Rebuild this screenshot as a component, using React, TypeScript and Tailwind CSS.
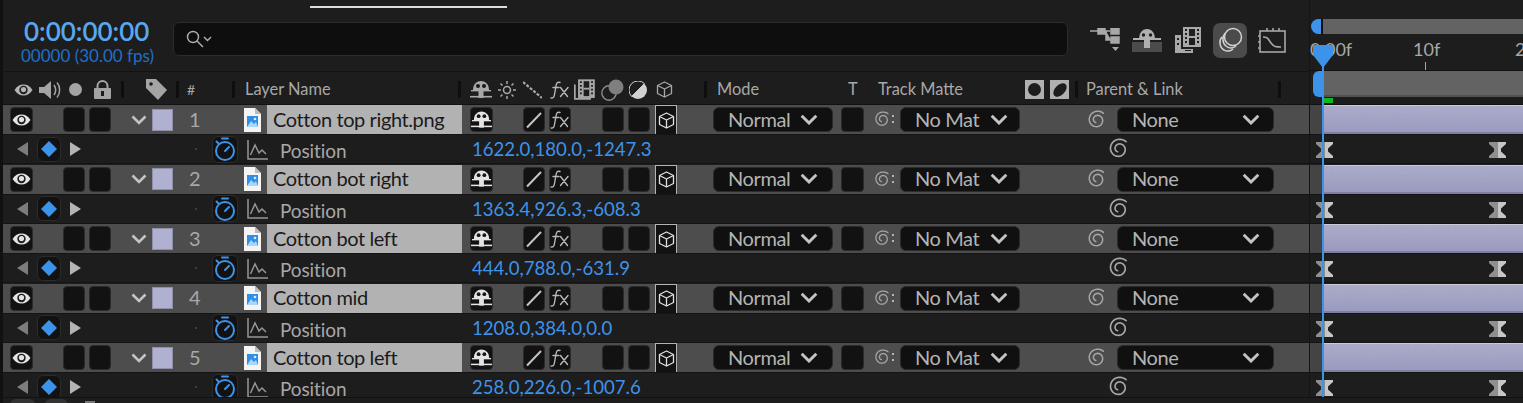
import type { ReactNode } from "react";

const layers = [
  { n: 1, name: "Cotton top right.png", pos: "1622.0,180.0,-1247.3" },
  { n: 2, name: "Cotton bot right", pos: "1363.4,926.3,-608.3" },
  { n: 3, name: "Cotton bot left", pos: "444.0,788.0,-631.9" },
  { n: 4, name: "Cotton mid", pos: "1208.0,384.0,0.0" },
  { n: 5, name: "Cotton top left", pos: "258.0,226.0,-1007.6" },
];

// open spiral, a turn and a half, starts upper right and winds to the middle
const swirlPath = (() => {
  const pts: string[] = [];
  for (let i = 0; i <= 48; i++) {
    const t = i / 48;
    const a = -0.8 - t * Math.PI * 3.1;
    const r = 9.3 - t * 6.5;
    pts.push(`${(10 + r * Math.cos(a)).toFixed(2)} ${(10 + r * Math.sin(a)).toFixed(2)}`);
  }
  return "M" + pts.join("L");
})();

function Eye({ color = "#b4b4b4" }: { color?: string }) {
  return (
    <svg width="19" height="12" viewBox="0 0 19 12">
      <path d="M0.5 6C3 2 6 0.5 9.5 0.5S16 2 18.5 6C16 10 13 11.5 9.5 11.5S3 10 0.5 6Z" fill={color} />
      <circle cx="9.5" cy="6" r="4.2" fill="#1c1c1c" />
      <circle cx="9.5" cy="5.6" r="2.6" fill={color} />
    </svg>
  );
}

function Shy({ color = "#c4c4c4" }: { color?: string }) {
  return (
    <svg width="22" height="20" viewBox="0 0 22 20">
      <path d="M3 10C3 4 7 1 11 1s8 3 8 9Z" fill={color} />
      <circle cx="8" cy="6" r="2" fill="#161616" />
      <circle cx="14" cy="6" r="2" fill="#161616" />
      <path d="M1 10.700h20" stroke={color} strokeWidth="1.400" />
      <rect x="8.500" y="10" width="5" height="8" fill={color} />
      <path d="M0 16.700h22" stroke={color} strokeWidth="1.600" />
    </svg>
  );
}

function Fx() {
  return (
    <svg width="20" height="20" viewBox="0 0 20 20" fill="none" stroke="#b8b8b8" strokeWidth="1.400" strokeLinecap="round">
      <path d="M10 2.500C7.500 1.500 6.500 3 6 6L4.500 14.500C4 17.500 3 18.500 1 18" />
      <path d="M3 7.500h6M10.500 7.500l7 9M18 7.500l-7.500 9" />
    </svg>
  );
}

function Cube({ color = "#c4c4c4" }: { color?: string }) {
  return (
    <svg width="17" height="17" viewBox="0 0 17 17" fill="none" stroke={color} strokeWidth="1.300" strokeLinejoin="round">
      <path d="M8.500 1L15.500 4.500V12.500L8.500 16L1.500 12.500V4.500Z" />
      <path d="M1.500 4.500L8.500 8L15.500 4.500M8.500 8V16" />
    </svg>
  );
}

function Swirl({ color = "#a6a6a6", size = 20 }: { color?: string; size?: number }) {
  return (
    <svg width={size} height={size} viewBox="0 0 20 20" fill="none" stroke={color} strokeWidth="1.500" strokeLinecap="round">
      <path d={swirlPath} />
    </svg>
  );
}

function Chevron({ color = "#c4c4c4", w = 16 }: { color?: string; w?: number }) {
  return (
    <svg width={w} height={w * 0.625} viewBox="0 0 16 10" fill="none" stroke={color} strokeWidth="2.600">
      <path d="M1.500 1.500L8 8l6.500-6.500" />
    </svg>
  );
}

function FileIcon() {
  return (
    <svg width="17" height="24" viewBox="0 0 17 24">
      <path d="M0 0h11l6 6v18H0Z" fill="#f4f4f4" />
      <path d="M11 0l6 6h-6Z" fill="#bcbcbc" />
      <rect x="3" y="8" width="11" height="11" fill="#2f8fe8" />
      <path d="M3 19l4-6 3 3 2-2 2 5Z" fill="#a9d6fb" />
      <circle cx="11" cy="11" r="1.300" fill="#d8eeff" />
    </svg>
  );
}

function Stopwatch() {
  return (
    <svg width="22" height="24" viewBox="0 0 22 24" fill="none" stroke="#3d93ea" strokeWidth="2" strokeLinecap="round">
      <circle cx="11" cy="14" r="9" />
      <path d="M8 1.500h6M2.500 4.500L4.500 6.500M11 14l4-4" />
    </svg>
  );
}

function GraphIcon() {
  return (
    <svg width="21" height="21" viewBox="0 0 21 21" fill="none" stroke="#969696" strokeWidth="1.500">
      <path d="M1 1v19h20" />
      <path d="M3.500 16L8 6l4 8 3-3 4 4" />
    </svg>
  );
}

function Film({ bg }: { bg: string }) {
  return (
    <>
      <path d="M8 0h18v20H8Z" fill="#a8a8a8" />
      <path d="M10 2h2v2h-2ZM10 6h2v2h-2ZM10 10h2v2h-2ZM10 14h2v2h-2ZM22 2h2v2h-2ZM22 6h2v2h-2ZM22 10h2v2h-2ZM22 14h2v2h-2Z" fill={bg} />
      <path d="M14 2h6v16h-6Z" fill={bg} />
      <path d="M14 9h6v2h-6Z" fill="#a8a8a8" />
    </>
  );
}

function Btn({ className = "", children }: { className?: string; children?: ReactNode }) {
  return (
    <div className={`flex h-[25px] shrink-0 items-center justify-center rounded-[4px] border border-[#2b2b2b] bg-[#121212] ${className}`}>
      {children}
    </div>
  );
}

function Dropdown({ label, className = "", gap }: { label: string; className?: string; gap: string }) {
  return (
    <div className={`flex h-[25px] shrink-0 items-center rounded-[6px] border border-[#2b2b2b] bg-[#101010] text-[20px] tracking-[-0.4px] text-[#b4b4b4] ${className}`}>
      <span className="mb-[2px] ml-[14px]">{label}</span>
      <span className={gap}>
        <Chevron w={18} />
      </span>
    </div>
  );
}

function Sep({ className = "" }: { className?: string }) {
  return <div className={`h-[17px] w-[3px] shrink-0 rounded-[1px] bg-[#0e0e0e] ${className}`} />;
}

function Keyframe({ className = "" }: { className?: string }) {
  return (
    <svg className={className} width="17" height="16" viewBox="0 0 17 16">
      <path d="M0 0h8.500v16H0v-2l5-4.500v-3L0 2Z" fill="#8f8f8f" />
      <path d="M8.500 0H17v2l-5 4.500v3l5 4.500v2H8.500Z" fill="#c6c6c6" />
    </svg>
  );
}

function PurpleBar() {
  return (
    <div className="relative h-full flex-1 overflow-hidden border-t border-[#c9c9d8] border-b-2 border-b-[#7f7fa6] bg-gradient-to-b from-[#adadca] to-[#9a9abf]">
      <svg className="absolute inset-0 h-full w-full opacity-30">
        <filter id="grain">
          <feTurbulence type="fractalNoise" baseFrequency="0.35" numOctaves="3" />
          <feColorMatrix values="0 0 0 0 0.35 0 0 0 0 0.35 0 0 0 0 0.55 2.500 0 0 0 -0.800" />
        </filter>
        <rect width="100%" height="100%" filter="url(#grain)" />
      </svg>
    </div>
  );
}

function LayerRow({ n, name }: { n: number; name: string }) {
  return (
    <div className="flex h-[30px] shrink-0 border-b border-[#141414]">
      <div className="flex w-[1306px] shrink-0 items-center bg-[#4d4d4d]">
        <Btn className="ml-[7px] w-[23px]">
          <Eye color="#e4e4e4" />
        </Btn>
        <Btn className="ml-[30px] w-[22px]" />
        <Btn className="ml-[4px] w-[22px]" />
        <div className="ml-[19px] flex w-[17px] shrink-0 justify-center">
          <Chevron />
        </div>
        <div className="ml-[5px] h-[22px] w-[21px] shrink-0 border border-[#8f8fa8] bg-[#b0b0d0]" />
        <div className="w-[71px] shrink-0 pb-[2px] pl-[16px] text-[20px] text-[#a8a8a8]">{n}</div>
        <FileIcon />
        <div className="ml-[6px] flex h-full w-[195px] shrink-0 items-center bg-[#b2b2b2] pb-[2px] pl-[6px] text-[20px] tracking-[-0.4px] text-[#1a1a1a]">
          {name}
        </div>
        <Btn className="ml-[8px] w-[23px]">
          <Shy color="#e4e4e4" />
        </Btn>
        <Btn className="ml-[30px] w-[22px]">
          <svg width="18" height="18" viewBox="0 0 18 18">
            <path d="M2 16.500L16 2" stroke="#c4c4c4" strokeWidth="2" />
          </svg>
        </Btn>
        <Btn className="ml-[4px] w-[22px]">
          <Fx />
        </Btn>
        <Btn className="ml-[31px] w-[22px]" />
        <Btn className="ml-[4px] w-[22px]" />
        <div className="ml-[5px] flex h-full w-[22px] shrink-0 items-center justify-center border-x border-t border-[#b4b4b4] bg-[#121212]">
          <Cube color="#e0e0e0" />
        </div>
        <Dropdown label="Normal" className="ml-[36px] w-[120px]" gap="ml-[10px]" />
        <Btn className="ml-[8px] w-[23px]" />
        <div className="relative ml-[10px] w-[18px] shrink-0">
          <Swirl size={17} />
          <span className="absolute right-[-2px] top-[4px] h-[2px] w-[2px] bg-[#b4b4b4]" />
          <span className="absolute right-[-2px] top-[10px] h-[2px] w-[2px] bg-[#b4b4b4]" />
        </div>
        <Dropdown label="No Mat" className="ml-[8px] w-[120px]" gap="ml-[11px]" />
        <div className="ml-[67px] w-[20px] shrink-0">
          <Swirl />
        </div>
        <Dropdown label="None" className="ml-[10px] w-[157px]" gap="ml-[64px]" />
      </div>
      <div className="w-[1px] shrink-0 bg-[#141414]" />
      <div className="w-[13px] shrink-0 bg-[#444444]" />
      <PurpleBar />
    </div>
  );
}

function PropRow({ pos }: { pos: string }) {
  return (
    <div className="flex h-[29px] shrink-0 items-center border-b border-[#141414]">
      <div className="flex w-[1306px] shrink-0 items-center">
        <svg className="ml-[14px] shrink-0" width="11" height="14" viewBox="0 0 11 14">
          <path d="M11 0v14L0 7Z" fill="#7d7d7d" />
        </svg>
        <Btn className="ml-[9px] w-[24px] rounded-[6px]">
          <svg width="16" height="16" viewBox="0 0 16 16">
            <path d="M8 0l8 8-8 8-8-8Z" fill="#3d93ea" />
          </svg>
        </Btn>
        <svg className="ml-[9px] shrink-0" width="11" height="14" viewBox="0 0 11 14">
          <path d="M0 0v14l11-7Z" fill="#b4b4b4" />
        </svg>
        <div className="ml-[114px] h-[2px] w-[2px] shrink-0 rounded-full bg-[#4a4a4a]" />
        <Btn className="ml-[15px] h-[27px] w-[26px] rounded-[6px]">
          <Stopwatch />
        </Btn>
        <div className="ml-[9px] shrink-0">
          <GraphIcon />
        </div>
        <div className="ml-[12px] mt-[5px] w-[192px] shrink-0 text-[19px] tracking-[-0.1px] text-[#a8a8a8]">Position</div>
        <div className="mt-[2px] w-[637px] shrink-0 text-[18.6px] text-[#3d93ea]">{pos}</div>
        <div className="-ml-[1px]">
          <Swirl size={22} />
        </div>
      </div>
      <div className="w-[1px] shrink-0 self-stretch bg-[#141414]" />
      <div className="relative h-full flex-1">
        <Keyframe className="absolute left-[6px] top-[7px]" />
        <Keyframe className="absolute left-[179px] top-[7px]" />
      </div>
    </div>
  );
}

export default function App() {
  return (
    <div className="relative h-[403px] w-[1523px] overflow-hidden border-l-[3px] border-[#111111] bg-[#1d1d1d] font-['Lato',sans-serif]">
      {/* top part: toolbar, column heads and the ruler */}
      <div className="flex h-[105px] border-b border-[#111111]">
        <div className="w-[1306px] shrink-0">
          <div className="h-[72px] border-b border-[#131313] pt-[6px]">
            <div className="ml-[307px] h-[2px] w-[197px] bg-[#dcdcdc]" />
            <div className="flex">
              <div className="w-[170px] shrink-0 pt-[7px]">
                <div className="pl-[21px] text-[26px] font-semibold leading-[32px] text-[#58a8f0]">0:00:00:00</div>
                <div className="pl-[18px] text-[17px] leading-[18px] text-[#1f70c8]">00000 (30.00 fps)</div>
              </div>
              <div className="mt-[14px] flex h-[34px] w-[895px] shrink-0 items-center rounded-[6px] border border-[#2c2c2c] bg-[#0e0e0e] pl-[12px]">
                <svg width="28" height="18" viewBox="0 0 28 18" fill="none" stroke="#b0b0b0" strokeWidth="1.400">
                  <circle cx="7" cy="7" r="5.500" />
                  <path d="M11 11l6 6" />
                  <path d="M18 7l3.500 3.500L25 7" />
                </svg>
              </div>
              <div className="mt-[8px] flex h-[48px] items-center">
                <svg className="ml-[22px]" width="30" height="24" viewBox="0 0 30 24" fill="#a8a8a8">
                  <path d="M0 3h10M8 0h7v6H8ZM15 3h5M21 0h8v6h-8ZM16 3v9h5M21 9h8v6h-8Z" stroke="#a8a8a8" strokeWidth="1.500" />
                  <path d="M22 19h7l-3.500 4Z" />
                </svg>
                <svg className="ml-[12px]" width="30" height="24" viewBox="0 0 30 24">
                  <path d="M7 12C7 5 10 1 15 1s8 4 8 11" fill="#b0b0b0" />
                  <circle cx="11.500" cy="7" r="1.700" fill="#1d1d1d" />
                  <circle cx="18.500" cy="7" r="1.700" fill="#1d1d1d" />
                  <rect x="12" y="12" width="6" height="8" fill="#b0b0b0" />
                  <path d="M0 14h12v10H0ZM18 14h12v10H18ZM12 20h6v4h-6Z" fill="#4c4c4c" />
                  <path d="M1 11h6M23 11h6" stroke="#b0b0b0" strokeWidth="2" />
                </svg>
                <svg className="ml-[13px]" width="26" height="26" viewBox="0 0 26 26">
                  <path d="M0 8h6v14h12v4H0Z" fill="#a8a8a8" />
                  <path d="M2 11h2v2H2ZM2 16h2v2H2ZM10 23h6v1h-6Z" fill="#1d1d1d" />
                  <Film bg="#1d1d1d" />
                </svg>
                <div className="ml-[12px] flex h-[35px] w-[34px] items-center justify-center rounded-[7px] bg-[#4b4b4b]">
                  <svg width="26" height="26" viewBox="0 0 26 26" fill="none" stroke="#d4d4d4" strokeWidth="1.500">
                    <circle cx="16" cy="10" r="8.500" />
                    <path d="M8.500 6C5 9 5 16 9 19M5 10C2 13 2 20 7 23c3 2 7 1 9-1" />
                    <path d="M9 19c3 2.500 7 2.500 10 0" />
                  </svg>
                </div>
                <svg className="ml-[11px]" width="29" height="27" viewBox="0 0 29 27" fill="none" stroke="#a8a8a8" strokeWidth="1.600">
                  <rect x="2" y="4" width="25" height="21" />
                  <path d="M5 10c5 0 5 2 8 6 3 4 5 4 10 4" />
                  <path d="M9 1v3M15 1v3M21 1v3M0 9h2M0 15h2M0 21h2" />
                </svg>
              </div>
            </div>
          </div>
          {/* column heads */}
          <div className="flex h-[32px] items-center pt-[3px] text-[16.4px] text-[#a8a8a8]">
            <div className="ml-[11px]">
              <Eye />
            </div>
            <svg className="ml-[6px]" width="22" height="18" viewBox="0 0 22 18" fill="none">
              <path d="M0 6h5l7-6v18l-7-6H0Z" fill="#a4a4a4" />
              <path d="M15 4c2 3 2 7 0 10M18 1.500c3.500 4 3.500 11 0 15" stroke="#a4a4a4" strokeWidth="1.500" />
            </svg>
            <div className="ml-[8px] h-[13px] w-[13px] rounded-full bg-[#a4a4a4]" />
            <svg className="ml-[12px]" width="17" height="19" viewBox="0 0 17 19">
              <path d="M3.500 9V6a5 5 0 0 1 10 0v3" fill="none" stroke="#a4a4a4" strokeWidth="2" />
              <rect y="8" width="17" height="11" rx="1" fill="#a4a4a4" />
              <rect x="7" y="11" width="3" height="5" fill="#1d1d1d" />
            </svg>
            <Sep className="ml-[10px]" />
            <svg className="ml-[22px]" width="21" height="21" viewBox="0 0 21 21">
              <path d="M0 0h10l11 11-9 10L0 9Z" fill="#a4a4a4" />
              <circle cx="5" cy="5" r="1.800" fill="#1d1d1d" />
            </svg>
            <Sep className="ml-[9px]" />
            <div className="ml-[8px] w-[37px] shrink-0 text-[14px]">#</div>
            <Sep className="ml-[8px]" />
            <div className="ml-[10px] w-[213px] shrink-0">Layer Name</div>
            <Sep />
            <div className="ml-[9px]">
              <Shy color="#a8a8a8" />
            </div>
            <svg className="ml-[6px]" width="18" height="18" viewBox="0 0 18 18" stroke="#a8a8a8" strokeWidth="1.500" fill="none">
              <circle cx="9" cy="9" r="3.500" />
              <path d="M9 0v3M9 15v3M0 9h3M15 9h3M2.500 2.500l2 2M13.500 13.500l2 2M2.500 15.500l2-2M13.500 4.500l2-2" />
            </svg>
            <svg className="ml-[7px]" width="19" height="18" viewBox="0 0 19 18" stroke="#a8a8a8" strokeWidth="2.200" strokeDasharray="3 1.500" fill="none">
              <path d="M0 1l19 16" />
            </svg>
            <div className="ml-[8px]">
              <Fx />
            </div>
            <svg className="ml-[4px]" width="22" height="21" viewBox="0 0 26 24">
              <path d="M0 6h2v16h18v2H0Z" fill="#a8a8a8" />
              <g transform="translate(-4 0) scale(1.100)">
                <Film bg="#1d1d1d" />
              </g>
            </svg>
            <svg className="ml-[5px]" width="23" height="22" viewBox="0 0 23 22">
              <circle cx="8" cy="14" r="7.200" fill="none" stroke="#8c8c8c" strokeWidth="1.400" />
              <circle cx="15" cy="8" r="7.500" fill="#7f7f7f" />
            </svg>
            <svg className="ml-[5px]" width="18" height="18" viewBox="0 0 18 18">
              <circle cx="9" cy="9" r="9" fill="#d0d0d0" />
              <path d="M15.400 2.600A9 9 0 0 0 2.600 15.400Z" fill="#1d1d1d" stroke="#d0d0d0" />
            </svg>
            <div className="ml-[9px]">
              <Cube color="#a8a8a8" />
            </div>
            <Sep className="ml-[31px]" />
            <div className="ml-[10px] w-[131px] shrink-0">Mode</div>
            <div className="w-[30px] shrink-0">T</div>
            <div className="w-[147px] shrink-0">Track Matte</div>
            <div className="flex h-[19px] w-[19px] shrink-0 items-center justify-center bg-[#b0b0b0]">
              <div className="h-[13px] w-[13px] rounded-full bg-[#1d1d1d]" />
            </div>
            <div className="ml-[6px] flex h-[19px] w-[19px] shrink-0 items-center justify-center bg-[#b0b0b0]">
              <div className="h-[10px] w-[16px] -rotate-45 rounded-[50%] bg-[#1d1d1d]" />
            </div>
            <Sep className="ml-[6px]" />
            <div className="ml-[8px] w-[192px] shrink-0">Parent &amp; Link</div>
            <Sep />
          </div>
        </div>
        {/* ruler */}
        <div className="w-[214px] shrink-0 border-l border-[#141414]">
          <div className="ml-[1px] mt-[19px] flex h-[15px]">
            <div className="w-[10px] rounded-l-full bg-[#3d93ea]" />
            <div className="flex-1 border-l-2 border-[#111111] bg-[#636363]" />
          </div>
          <div className="relative h-[36px] text-[18px] text-[#a8a8a8]">
            <span className="absolute left-0 top-[2px]">0:00f</span>
            <span className="absolute left-[103px] top-[2px]">10f</span>
            <span className="absolute left-[205px] top-[2px]">2</span>
            <div className="absolute bottom-0 left-[115px] h-[8px] w-px bg-[#a8a8a8]" />
          </div>
          <div className="flex h-[27px] border-t border-[#101010]">
            <div className="ml-[3px] w-[10px] rounded-l-[6px] bg-[#3d93ea]" />
            <div className="flex-1 border-b-2 border-[#505050] bg-[#636363]" />
          </div>
          <div className="ml-[13px] mt-[1px] h-[5px] w-[10px] bg-[#10b820]" />
        </div>
      </div>

      {/* layer list, cut by the footer */}
      <div className="h-[292px] overflow-hidden">
        {layers.map((l) => (
          <div key={l.n} className="flex h-[59.5px] flex-col">
            <LayerRow n={l.n} name={l.name} />
            <PropRow pos={l.pos} />
          </div>
        ))}
      </div>

      {/* footer buttons, mostly off the picture */}
      <div className="flex border-t border-[#111111] pl-[7px] pt-[1px]">
        <div className="h-[8px] w-[25px] rounded-t-[6px] bg-[#333333]" />
        <div className="ml-[10px] h-[8px] w-[23px] rounded-t-[6px] bg-[#333333]" />
        <div className="ml-[17px] mt-[2px] h-[8px] w-[10px] bg-[#777777]" />
      </div>

      {/* playhead */}
      <div className="absolute bottom-[6px] left-[1319px] top-[60px] w-[2px] bg-[#3d93ea]" />
      <svg className="absolute left-[1310px] top-[45px]" width="20" height="24" viewBox="0 0 20 24">
        <path d="M0 0h20v10L10 23 0 10Z" fill="#3d93ea" />
      </svg>
    </div>
  );
}
